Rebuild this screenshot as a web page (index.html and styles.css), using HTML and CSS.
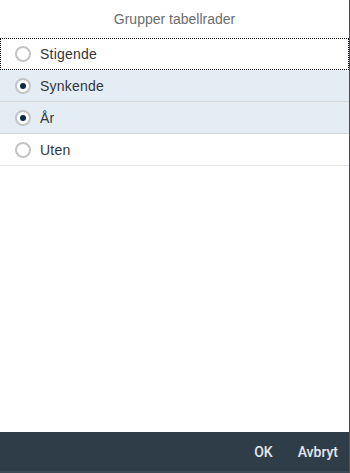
FILE: index.html
```html
<!DOCTYPE html>
<html>
<head>
<meta charset="utf-8">
<link rel="stylesheet" href="styles.css">
</head>
<body>
<div class="dialog">
  <header class="title">Grupper tabellrader</header>
  <ul class="list">
    <li class="row focus"><span class="radio"></span><span class="label">Stigende</span></li>
    <li class="row selected"><span class="radio on"></span><span class="label">Synkende</span></li>
    <li class="row selected"><span class="radio on"></span><span class="label">År</span></li>
    <li class="row"><span class="radio"></span><span class="label">Uten</span></li>
  </ul>
  <div class="spacer"></div>
  <footer class="footer">
    <button class="btn">OK</button>
    <button class="btn">Avbryt</button>
  </footer>
</div>
</body>
</html>
```
FILE: styles.css
```css
html, body { margin: 0; padding: 0; background: #fff; }
body { font-family: "Liberation Sans", Arial, sans-serif; }
.dialog {
  width: 349px;
  height: 473px;
  border-right: 1px solid #4b4f54;
  display: flex;
  flex-direction: column;
  background: #fff;
}
.title {
  height: 38px;
  display: flex;
  align-items: center;
  justify-content: center;
  font-size: 14px;
  color: #6a6d70;
  box-sizing: border-box;
  padding-bottom: 1px;
}
.list { list-style: none; margin: 0; padding: 0; }
.row {
  height: 32px;
  box-sizing: border-box;
  display: flex;
  align-items: center;
  border-bottom: 1px solid #e5e5e5;
  font-size: 14px;
  color: #32363a;
}
.label { letter-spacing: 0.2px; }
.row.focus { border: 1px dotted #000; }
.row.selected { background: #e5edf4; border-bottom-color: #d9d9d9; }
.radio {
  width: 16px;
  height: 16px;
  border: 2px solid #c2c4c6;
  border-radius: 50%;
  box-sizing: border-box;
  background: #fff;
  margin-left: 15px;
  margin-right: 9px;
  display: flex;
  align-items: center;
  justify-content: center;
}
.row.focus .radio { margin-left: 14px; }
.radio.on::after {
  content: "";
  width: 6px;
  height: 6px;
  border-radius: 50%;
  background: #0a2a4d;
}
.spacer { flex: 1; }
.footer {
  height: 41px;
  background: #2f3d49;
  display: flex;
  justify-content: flex-end;
  align-items: center;
  padding-right: 11px;
  gap: 25px;
  border-bottom: 2px solid #3d4954;
  box-sizing: border-box;
}
.btn {
  background: none;
  border: none;
  padding: 0;
  font-family: Roboto, "Liberation Sans", Arial, sans-serif;
  font-size: 14px;
  font-weight: 500;
  color: #e4e8ec;
}
```
